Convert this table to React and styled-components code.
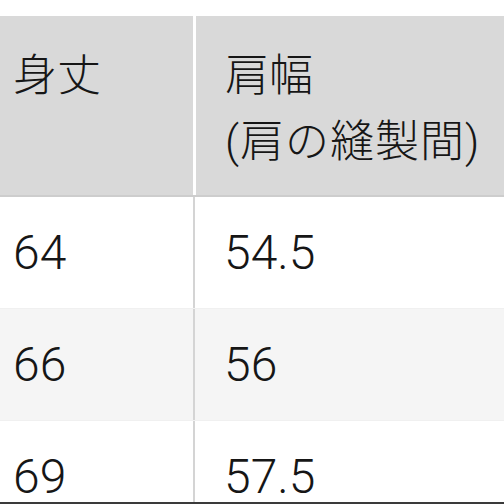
import styled, { createGlobalStyle } from 'styled-components';

const GlobalStyle = createGlobalStyle`
  html, body {
    margin: 0;
    padding: 0;
    background: #ffffff;
    overflow: hidden;
  }
`;

const Page = styled.div`
  padding-top: 16px;
  width: 504px;
  height: 504px;
  box-sizing: border-box;
  overflow: hidden;
  font-family: Roboto, "Noto Sans CJK JP", sans-serif;
  font-weight: 300;
  color: #161616;
`;

const Table = styled.div`
  display: flex;
  flex-direction: column;
  width: 560px;
  height: 488px;
  box-sizing: border-box;
  overflow: hidden;
  border-bottom: 2px solid #3a3a3a;
`;

const Row = styled.div`
  display: grid;
  grid-template-columns: 193px 1fr;
  flex: 0 0 ${(p) => p.$height}px;
  background: ${(p) => (p.$head ? '#d9d9d9' : p.$alt ? '#f5f5f5' : '#ffffff')};
  border-bottom: ${(p) => (p.$head ? '2px solid #cdcdcd' : '1px solid #f0f0f0')};
  box-sizing: border-box;
`;

const Cell = styled.div`
  display: flex;
  flex-direction: column;
  justify-content: ${(p) => (p.$head ? 'flex-start' : 'center')};
  padding: ${(p) => (p.$head ? '27px 0 0' : '0')};
  padding-left: ${(p) => (p.$second ? '29px' : '13px')};
  border-left: ${(p) =>
    p.$second ? (p.$head ? '3px solid #ffffff' : '2px solid #d4d4d4') : 'none'};
  font-size: ${(p) => (p.$head ? 44 : 48)}px;
  line-height: 66px;
  white-space: nowrap;
`;

const SubLine = styled.span`
  letter-spacing: 1px;
`;

const rows = [
  ['64', '54.5'],
  ['66', '56'],
  ['69', '57.5'],
];

export default function App() {
  return (
    <>
      <GlobalStyle />
      <Page>
        <Table>
          <Row $head $height={181}>
            <Cell $head>身丈</Cell>
            <Cell $head $second>
              <span>肩幅</span>
              <SubLine>(肩の縫製間)</SubLine>
            </Cell>
          </Row>
          {rows.map((r, i) => (
            <Row key={r[0]} $alt={i % 2 === 1} $height={112}>
              <Cell>{r[0]}</Cell>
              <Cell $second>{r[1]}</Cell>
            </Row>
          ))}
        </Table>
      </Page>
    </>
  );
}
